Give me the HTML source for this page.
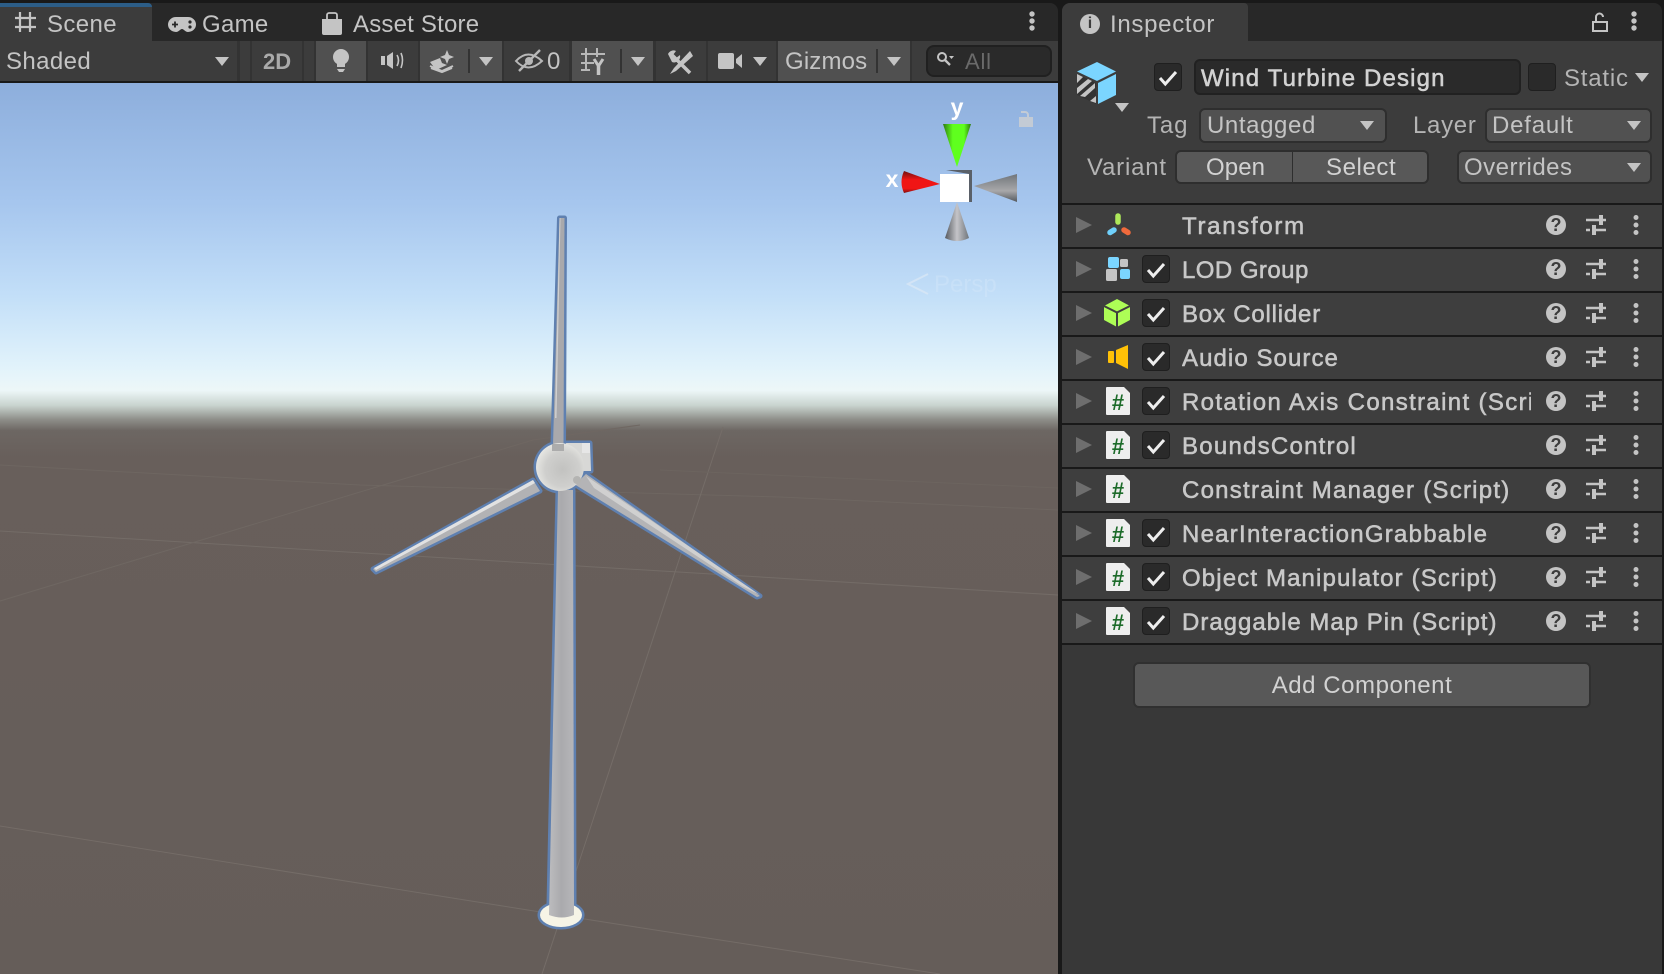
<!DOCTYPE html>
<html><head><meta charset="utf-8"><title>Unity Scene and Inspector</title>
<style>
html,body{margin:0;padding:0;width:1664px;height:974px;overflow:hidden;background:#191919}
body{position:relative;font-family:"Liberation Sans",sans-serif;color:#c4c4c4}
.a{position:absolute}
.t{position:absolute;font-size:24px;line-height:30px;white-space:nowrap;color:#c4c4c4}
.b{-webkit-text-stroke:.55px currentColor;letter-spacing:1.25px;color:#c8c8c8}
.btn{position:absolute;top:41px;height:40px;background:#3c3c3c}
.on{background:#505050}
.tri{position:absolute;width:0;height:0;border-left:7.5px solid transparent;border-right:7.5px solid transparent;border-top:9px solid #c4c4c4}
.div{position:absolute;top:49px;width:2px;height:24px;background:#333}
.field{position:absolute;background:#515151;border:2px solid #2e2e2e;border-radius:6px;box-sizing:border-box}
.row{position:absolute;left:1062px;width:600px;height:42px;background:#3e3e3e;border-bottom:2px solid #191919}
.row .rt{position:absolute;left:14px;top:12px;width:0;height:0;border-top:8.5px solid transparent;border-bottom:8.5px solid transparent;border-left:16px solid #6e6e6e}
.row .cb{position:absolute;left:80px;top:6px;width:28px;height:28px;box-sizing:border-box;background:#2a2a2a;border:1px solid #1f1f1f;border-radius:4px}
.row .tx{left:120px;top:7px;width:349px;overflow:hidden}
.row svg{position:absolute;left:0;top:0;overflow:visible}
.cbx{position:absolute;width:28px;height:28px;box-sizing:border-box;background:#2a2a2a;border:1px solid #1f1f1f;border-radius:4px}
.help{position:absolute;left:484px;top:10px;width:20px;height:20px;border-radius:50%;background:#c4c4c4;color:#3c3c3c;font-size:18px;font-weight:bold;line-height:21px;text-align:center}
</style></head><body>

<!-- left panel tab strip -->
<div class="a" style="left:0;top:3px;width:1058px;height:38px;background:#282828;border-radius:0 8px 0 0"></div>
<div class="a" style="left:0;top:3px;width:152px;height:38px;background:#3c3c3c;border-radius:0 4px 0 0"></div>
<div class="a" style="left:0;top:3px;width:152px;height:4px;background:#2c5d87;border-radius:0 4px 0 0"></div>
<svg class="a" style="left:0;top:0" width="1058" height="84" fill="none">
 <path d="M20 12v20M30 12v20M15 18h21M15 27h21" stroke="#c4c4c4" stroke-width="2.200"/>
 <path d="M176 17h12a8 7.500 0 0 1 0 15c-3 0-4-3-6-3s-3 3-6 3a8 7.500 0 0 1 0-15z" fill="#c4c4c4"/>
 <path d="M172 24.500h6M175 21.500v6" stroke="#282828" stroke-width="1.800"/>
 <circle cx="190" cy="22" r="1.600" fill="#282828"/><circle cx="190" cy="27" r="1.600" fill="#282828"/>
 <path d="M322 19h20v14a2 2 0 0 1-2 2h-16a2 2 0 0 1-2-2z" fill="#c4c4c4"/>
 <path d="M327 22v-7a2 2 0 0 1 2-2h6a2 2 0 0 1 2 2v7" stroke="#c4c4c4" stroke-width="1.800"/>
</svg>
<div class="t" style="left:47px;top:10px;letter-spacing:.4px">Scene</div>
<div class="t" style="left:202px;top:10px;letter-spacing:.3px">Game</div>
<div class="t" style="left:353px;top:10px;letter-spacing:.2px">Asset Store</div>
<svg class="a" style="left:1026px;top:10px" width="12" height="24"><circle cx="6" cy="4" r="2.700" fill="#c4c4c4"/><circle cx="6" cy="11" r="2.700" fill="#c4c4c4"/><circle cx="6" cy="18" r="2.700" fill="#c4c4c4"/></svg>

<!-- toolbar -->
<div class="a" style="left:0;top:41px;width:1058px;height:40px;background:#333"></div>
<div class="btn" style="left:0;width:237px"></div>
<div class="t" style="left:6px;top:47px;letter-spacing:.4px">Shaded</div>
<div class="tri" style="left:215px;top:57px"></div>
<div class="btn" style="left:240px;width:10px"></div>
<div class="btn" style="left:252px;width:50px"></div>
<div class="t" style="left:263px;top:47px;font-size:22px;font-weight:bold;color:#aaa">2D</div>
<div class="btn" style="left:304px;width:10px"></div>
<div class="btn on" style="left:316px;width:50px"></div>
<div class="btn" style="left:368px;width:50px"></div>
<div class="btn on" style="left:420px;width:82px"></div>
<div class="btn" style="left:504px;width:65px"></div>
<div class="btn on" style="left:572px;width:81px"></div>
<div class="btn" style="left:656px;width:50px"></div>
<div class="btn" style="left:708px;width:68px"></div>
<div class="btn on" style="left:778px;width:132px"></div>
<div class="btn" style="left:912px;width:146px"></div>
<div class="div" style="left:468px"></div><div class="tri" style="left:479px;top:57px"></div>
<div class="div" style="left:620px"></div><div class="tri" style="left:631px;top:57px"></div>
<div class="tri" style="left:753px;top:57px"></div>
<div class="div" style="left:876px"></div><div class="tri" style="left:887px;top:57px"></div>
<div class="t" style="left:547px;top:47px">0</div>
<div class="t" style="left:785px;top:47px;letter-spacing:.15px">Gizmos</div>
<div class="a" style="left:926px;top:45px;width:126px;height:32px;box-sizing:border-box;background:#2a2a2a;border:2px solid #202020;border-radius:8px"></div>
<div class="t" style="left:965px;top:47px;color:#6a6a6a;font-size:22px;letter-spacing:.8px">All</div>
<svg class="a" style="left:0;top:41px" width="1058" height="40" fill="none">
 <circle cx="341" cy="16" r="8" fill="#c4c4c4"/><path d="M337 22h8v4h-8z" fill="#c4c4c4"/><path d="M337 28h8l-2 3h-4z" fill="#c4c4c4"/>
 <path d="M381 15h4v9h-4zM387 15l6-4v17l-6-4z" fill="#c4c4c4"/><path d="M397 14q3 5 0 11M401 12q3 7 0 15" stroke="#c4c4c4" stroke-width="1.600"/>
 <path d="M447 9l2 5 5 2-5 2-2 5-2-5-5-2 5-2z" fill="#c4c4c4"/><path d="M430 21l10-4 2 5 5 2-11 5z" fill="#c4c4c4"/><path d="M430 25l12 5 11-5M431 27l11 4 10-4" stroke="#c4c4c4" stroke-width="2"/>
 <path d="M516 20q12-13 26 0q-14 13-26 0z" stroke="#b8b8b8" stroke-width="2"/><circle cx="529" cy="20" r="4" fill="#b8b8b8"/><path d="M519 30l21-21" stroke="#b8b8b8" stroke-width="2.400"/>
 <path d="M586 7v23M597 7v9M581 13h24M581 22h13M581 29h9" stroke="#b8b8b8" stroke-width="2"/><path d="M594 18l4.500 7 4.500-7" stroke="#c4c4c4" stroke-width="3"/><path d="M598.500 25v9" stroke="#c4c4c4" stroke-width="3.500"/>
 <path d="M672 14l18 18" stroke="#c4c4c4" stroke-width="3.500"/><path d="M668 13a6 6 0 0 1 8-3l-3 4 3 3 4-3a6 6 0 0 1-8 7z" fill="#c4c4c4"/><path d="M690 10l-16 17-4 6 6-3 17-15z" fill="#c4c4c4"/>
 <rect x="718" y="12" width="16" height="16" rx="2" fill="#c4c4c4"/><path d="M736 18l6-5v14l-6-5z" fill="#c4c4c4"/>
 <circle cx="942" cy="16" r="4" stroke="#c4c4c4" stroke-width="2"/><path d="M945 19l5 5" stroke="#c4c4c4" stroke-width="2.300"/><path d="M949 15h5l-2.500 3z" fill="#c4c4c4"/>
</svg>

<!-- scene view -->
<svg class="a" style="left:0;top:83px" width="1058" height="891" viewBox="0 83 1058 891">
 <defs>
  <linearGradient id="sky" x1="0" y1="83" x2="0" y2="974" gradientUnits="userSpaceOnUse">
   <stop offset="0" stop-color="#8daedc"/>
   <stop offset=".135" stop-color="#a6c6ee"/>
   <stop offset=".24" stop-color="#c3dff8"/>
   <stop offset=".32" stop-color="#e2f3fb"/>
   <stop offset=".345" stop-color="#edf7f8"/>
   <stop offset=".362" stop-color="#c8d3ce"/>
   <stop offset=".378" stop-color="#8d8d88"/>
   <stop offset=".39" stop-color="#6d6763"/>
   <stop offset=".42" stop-color="#685f5b"/>
   <stop offset="1" stop-color="#655d59"/>
  </linearGradient>
  <linearGradient id="mast" x1="0" x2="1" y1="0" y2="0"><stop offset="0" stop-color="#bcbcbe"/><stop offset=".5" stop-color="#aaaaad"/><stop offset="1" stop-color="#b6b6b9"/></linearGradient>
  <radialGradient id="hub" cx=".55" cy=".55" r=".6"><stop offset="0" stop-color="#c2c2c0"/><stop offset=".6" stop-color="#cfcfcd"/><stop offset="1" stop-color="#eaeae6"/></radialGradient>
  <linearGradient id="cg" x1="0" x2="1" y1="0" y2="0"><stop offset="0" stop-color="#2f7a10"/><stop offset=".35" stop-color="#5fff1e"/><stop offset=".75" stop-color="#5fff1e"/><stop offset="1" stop-color="#2f7a10"/></linearGradient>
  <linearGradient id="cr" x1="0" x2="0" y1="0" y2="1"><stop offset="0" stop-color="#6e1010"/><stop offset=".4" stop-color="#f01515"/><stop offset=".8" stop-color="#f01515"/><stop offset="1" stop-color="#7a1010"/></linearGradient>
  <linearGradient id="cw" x1="0" x2="0" y1="0" y2="1"><stop offset="0" stop-color="#70757a"/><stop offset=".6" stop-color="#a8a8aa"/><stop offset="1" stop-color="#55595e"/></linearGradient>
  <linearGradient id="cb" x1="0" x2="1" y1="0" y2="0"><stop offset="0" stop-color="#55595e"/><stop offset=".5" stop-color="#c4c4c8"/><stop offset="1" stop-color="#70757a"/></linearGradient>
 </defs>
 <rect x="0" y="83" width="1058" height="891" fill="url(#sky)"/>
 <g stroke="#746c67" stroke-width="1" fill="none">
  <path d="M0 531L1058 595"/>
  <path d="M0 826L490 904L610 923L940 974"/>
  <path d="M0 601L360 492L533 440L640 425" stroke="#6f6762"/>
  <path d="M0 465L360 485L780 497L1058 510" stroke="#6e6661"/>
  <path d="M542 974L723 427" stroke="#756d68"/>
  <path d="M660 470L1058 488" stroke="#6c645f"/>
 </g>
 <!-- outline layer -->
 <g fill="#5f80b0" stroke="#5f80b0" stroke-width="5" stroke-linejoin="round">
  <path d="M559.500 218h5l-1 227h-10.500z"/>
  <path d="M373 569L533 480L540 491L376 572z"/>
  <path d="M760 596L586 474Q580 480 574 484L757 597z"/>
  <path d="M558 490h15l1 415h-25z"/>
  <ellipse cx="561" cy="915" rx="21" ry="12"/>
  <circle cx="560" cy="467" r="24"/>
  <path d="M566 443h24l1 28h-19z"/>
 </g>
 <ellipse cx="561" cy="915" rx="21" ry="12" fill="#f6f4e6"/>
 <path d="M558 490h15l1 425q-12 5-25 0z" fill="url(#mast)"/>
 <path d="M373 569L533 480L540 491L376 572z" fill="#b2b2b4"/>
 <path d="M374 568L533 480L535 483L376 570z" fill="#e2e2e2"/>
 <path d="M760 596L586 474Q580 480 574 484L757 597z" fill="#b4b4b6"/>
 <path d="M586 476L760 595L742 586L594 488z" fill="#d0d0d0"/>
 <path d="M566 443h24l1 28h-19z" fill="#d8d8d6"/>
 <path d="M582 443l8 0v10h-8z" fill="#e6e6e6"/>
 <path d="M559.500 218h5l-1 227h-10.500z" fill="#a9a9ac"/>
 <path d="M559.500 218h1l-4 200h-1.500z" fill="#d0d0d0"/>
 <circle cx="560" cy="467" r="24" fill="url(#hub)"/>
 <path d="M552 444h12v7h-12z" fill="#acacac"/>
 <circle cx="577" cy="480" r="4" fill="#b4b4b2"/>

 <!-- gizmo -->
 <path d="M943 124h28l-14 43z" fill="url(#cg)"/>
 <path d="M940 184l-36-13q-5 11 0 22z" fill="url(#cr)"/>
 <path d="M974 186l43-12v28z" fill="url(#cw)"/>
 <path d="M957 202l12 36q-12 6-24 0z" fill="url(#cb)"/>
 <path d="M946 170h26v32h-3v-28z" fill="#5a6068"/>
 <rect x="940" y="174" width="29" height="28" fill="#fff"/>
 <text x="957" y="115" fill="#fff" font-family="Liberation Sans" font-weight="bold" font-size="23" text-anchor="middle">y</text>
 <text x="892" y="187" fill="#fff" font-family="Liberation Sans" font-weight="bold" font-size="23" text-anchor="middle">x</text>
 <rect x="1019" y="117" width="14" height="10" fill="#c3cbd5"/>
 <path d="M1021 112h4a3 3 0 0 1 3 3v2" fill="none" stroke="#c3cbd5" stroke-width="2"/>
 <path d="M928 274l-20 10 20 10" fill="none" stroke="#dbe8f5" stroke-opacity=".7" stroke-width="2"/>
 <text x="934" y="292" fill="#ffffff" fill-opacity=".14" font-family="Liberation Sans" font-size="24">Persp</text>
</svg>

<!-- inspector -->
<div class="a" style="left:1062px;top:3px;width:600px;height:38px;background:#282828;border-radius:8px 8px 0 0"></div>
<div class="a" style="left:1062px;top:3px;width:186px;height:38px;background:#3c3c3c;border-radius:8px 4px 0 0"></div>
<div class="a" style="left:1062px;top:41px;width:600px;height:162px;background:#3c3c3c"></div>
<div class="a" style="left:1062px;top:203px;width:600px;height:771px;background:#383838"></div>
<div class="a" style="left:1062px;top:203px;width:600px;height:2px;background:#191919"></div>
<div class="a" style="left:1080px;top:14px;width:20px;height:20px;border-radius:50%;background:#c4c4c4;color:#3c3c3c;text-align:center;font:bold 16px/20px 'Liberation Sans',sans-serif">i</div>
<div class="t" style="left:1110px;top:10px;letter-spacing:.7px">Inspector</div>
<svg class="a" style="left:0;top:0" width="1664" height="205" fill="none">
 <rect x="1593" y="22" width="14" height="9" stroke="#c4c4c4" stroke-width="2"/>
 <path d="M1596 22v-5a3.500 3.500 0 0 1 7 0" stroke="#c4c4c4" stroke-width="2"/>
 <circle cx="1634" cy="14" r="2.700" fill="#c4c4c4"/><circle cx="1634" cy="21" r="2.700" fill="#c4c4c4"/><circle cx="1634" cy="28" r="2.700" fill="#c4c4c4"/>
 <path d="M1097 62l19 9.500-19 9.500-20-9.500z" fill="#7bd5ff"/>
 <path d="M1116 74v21l-18 9v-21z" fill="#7bd5ff"/>
 <path d="M1077 74l19 9v21l-19-9z" fill="#333"/>
 <path d="M1077 74l6 3-6 6zM1077 88l11-9 4 2-15 13zM1080 96l15-13v5l-10 9zM1090 101l6-5v7z" fill="#c4c4c4"/>
 <path d="M1115 103h14l-7 9z" fill="#c4c4c4"/>
</svg>
<div class="cbx" style="left:1154px;top:63px"></div>
<svg class="a" style="left:1154px;top:63px" width="28" height="28" fill="none"><path d="M6 15l5.300 6L22 9" stroke="#eee" stroke-width="3"/></svg>
<div class="a" style="left:1194px;top:59px;width:327px;height:36px;box-sizing:border-box;background:#2a2a2a;border:2px solid #212121;border-radius:6px"></div>
<div class="t" style="left:1201px;top:64px;color:#d2d2d2;-webkit-text-stroke:.55px #d2d2d2;letter-spacing:1.15px">Wind Turbine Design</div>
<div class="cbx" style="left:1528px;top:63px"></div>
<div class="t" style="left:1564px;top:64px;letter-spacing:.8px;color:#b4b4b4">Static</div>
<div class="tri" style="left:1635px;top:73px"></div>

<div class="t" style="left:1147px;top:111px;letter-spacing:.9px;color:#b4b4b4">Tag</div>
<div class="field" style="left:1199px;top:108px;width:188px;height:35px"></div>
<div class="t" style="left:1207px;top:111px;letter-spacing:.6px">Untagged</div>
<div class="tri" style="left:1360px;top:121px"></div>
<div class="t" style="left:1413px;top:111px;letter-spacing:.7px;color:#b4b4b4">Layer</div>
<div class="field" style="left:1485px;top:108px;width:167px;height:35px"></div>
<div class="t" style="left:1492px;top:111px;letter-spacing:.8px">Default</div>
<div class="tri" style="left:1627px;top:121px"></div>

<div class="t" style="left:1087px;top:153px;letter-spacing:.8px;color:#b4b4b4">Variant</div>
<div class="field" style="left:1175px;top:150px;width:119px;height:34px;background:#585858;border-radius:6px 0 0 6px"></div>
<div class="field" style="left:1293px;top:150px;width:136px;height:34px;background:#585858;border-left:0;border-radius:0 6px 6px 0"></div>
<div class="t" style="left:1206px;top:153px;letter-spacing:.1px;color:#d2d2d2">Open</div>
<div class="t" style="left:1326px;top:153px;letter-spacing:.6px;color:#d2d2d2">Select</div>
<div class="field" style="left:1457px;top:150px;width:195px;height:34px"></div>
<div class="t" style="left:1464px;top:153px;letter-spacing:.5px">Overrides</div>
<div class="tri" style="left:1627px;top:163px"></div>

<!-- component rows -->
<div class="row" style="top:205px"><div class="rt"></div>
 <svg width="600" height="42" fill="none" stroke-width="5.500" stroke-linecap="round"><path d="M56 11v6" stroke="#aee85a"/><path d="M48 27.500l4-2.500" stroke="#6fd0fb"/><path d="M62 25l4 2.500" stroke="#f06a3c"/></svg>
 <div class="t b tx" style="letter-spacing:1.7px">Transform</div>
 <div class="help">?</div>
 <svg width="600" height="42" fill="none" stroke="#c4c4c4"><path d="M524 15h13M541 15h3M534 25h10M524 25h4" stroke-width="2.400"/><path d="M537 10h4v10h-4zM530 20h4v10h-4z" fill="#c4c4c4" stroke-width="0"/><circle cx="574" cy="12.500" r="2.500" fill="#c4c4c4" stroke="none"/><circle cx="574" cy="20" r="2.500" fill="#c4c4c4" stroke="none"/><circle cx="574" cy="27.500" r="2.500" fill="#c4c4c4" stroke="none"/></svg>
</div>

<div class="row" style="top:249px"><div class="rt"></div><div class="cb"></div>
 <svg width="600" height="42" fill="none"><rect x="46" y="8" width="11" height="11" rx="2" fill="#7bd5ff"/><rect x="58" y="10" width="8" height="8" rx="1.500" fill="#c4c4c4"/><rect x="44" y="20" width="11" height="12" rx="1.500" fill="#c4c4c4"/><rect x="58" y="20" width="10" height="10" rx="2" fill="#7bd5ff"/><path d="M86 21l5.300 6L102 15" stroke="#eee" stroke-width="3"/></svg>
 <div class="t b tx" style="letter-spacing:.45px">LOD Group</div>
 <div class="help">?</div>
 <svg width="600" height="42" fill="none" stroke="#c4c4c4"><path d="M524 15h13M541 15h3M534 25h10M524 25h4" stroke-width="2.400"/><path d="M537 10h4v10h-4zM530 20h4v10h-4z" fill="#c4c4c4" stroke-width="0"/><circle cx="574" cy="12.500" r="2.500" fill="#c4c4c4" stroke="none"/><circle cx="574" cy="20" r="2.500" fill="#c4c4c4" stroke="none"/><circle cx="574" cy="27.500" r="2.500" fill="#c4c4c4" stroke="none"/></svg>
</div>

<div class="row" style="top:293px"><div class="rt"></div><div class="cb"></div>
 <svg width="600" height="42" fill="none"><path d="M55 6l13 7v14l-13 7-13-7V13z" fill="#adfd56"/><path d="M42 13l13 6.500L68 13M55 19.500V34" stroke="#3e3e3e" stroke-width="2"/><path d="M86 21l5.300 6L102 15" stroke="#eee" stroke-width="3"/></svg>
 <div class="t b tx" style="letter-spacing:.8px">Box Collider</div>
 <div class="help">?</div>
 <svg width="600" height="42" fill="none" stroke="#c4c4c4"><path d="M524 15h13M541 15h3M534 25h10M524 25h4" stroke-width="2.400"/><path d="M537 10h4v10h-4zM530 20h4v10h-4z" fill="#c4c4c4" stroke-width="0"/><circle cx="574" cy="12.500" r="2.500" fill="#c4c4c4" stroke="none"/><circle cx="574" cy="20" r="2.500" fill="#c4c4c4" stroke="none"/><circle cx="574" cy="27.500" r="2.500" fill="#c4c4c4" stroke="none"/></svg>
</div>

<div class="row" style="top:337px"><div class="rt"></div><div class="cb"></div>
 <svg width="600" height="42" fill="none"><rect x="46" y="14" width="6" height="12" rx="1" fill="#ffc107"/><path d="M54 13l12-5v24l-12-6z" fill="#ffc107"/><path d="M86 21l5.300 6L102 15" stroke="#eee" stroke-width="3"/></svg>
 <div class="t b tx" style="letter-spacing:1.07px">Audio Source</div>
 <div class="help">?</div>
 <svg width="600" height="42" fill="none" stroke="#c4c4c4"><path d="M524 15h13M541 15h3M534 25h10M524 25h4" stroke-width="2.400"/><path d="M537 10h4v10h-4zM530 20h4v10h-4z" fill="#c4c4c4" stroke-width="0"/><circle cx="574" cy="12.500" r="2.500" fill="#c4c4c4" stroke="none"/><circle cx="574" cy="20" r="2.500" fill="#c4c4c4" stroke="none"/><circle cx="574" cy="27.500" r="2.500" fill="#c4c4c4" stroke="none"/></svg>
</div>

<div class="row" style="top:381px"><div class="rt"></div><div class="cb"></div>
 <svg width="600" height="42" fill="none"><path d="M44 7a1 1 0 0 1 1-1h17l6 6v21a1 1 0 0 1-1 1H45a1 1 0 0 1-1-1z" fill="#eee"/><text x="56" y="29" font-family="Liberation Sans" font-weight="bold" font-size="22" fill="#1d6b2a" text-anchor="middle">#</text><path d="M86 21l5.300 6L102 15" stroke="#eee" stroke-width="3"/></svg>
 <div class="t b tx" style="letter-spacing:1.35px">Rotation Axis Constraint (Script)</div>
 <div class="help">?</div>
 <svg width="600" height="42" fill="none" stroke="#c4c4c4"><path d="M524 15h13M541 15h3M534 25h10M524 25h4" stroke-width="2.400"/><path d="M537 10h4v10h-4zM530 20h4v10h-4z" fill="#c4c4c4" stroke-width="0"/><circle cx="574" cy="12.500" r="2.500" fill="#c4c4c4" stroke="none"/><circle cx="574" cy="20" r="2.500" fill="#c4c4c4" stroke="none"/><circle cx="574" cy="27.500" r="2.500" fill="#c4c4c4" stroke="none"/></svg>
</div>

<div class="row" style="top:425px"><div class="rt"></div><div class="cb"></div>
 <svg width="600" height="42" fill="none"><path d="M44 7a1 1 0 0 1 1-1h17l6 6v21a1 1 0 0 1-1 1H45a1 1 0 0 1-1-1z" fill="#eee"/><text x="56" y="29" font-family="Liberation Sans" font-weight="bold" font-size="22" fill="#1d6b2a" text-anchor="middle">#</text><path d="M86 21l5.300 6L102 15" stroke="#eee" stroke-width="3"/></svg>
 <div class="t b tx">BoundsControl</div>
 <div class="help">?</div>
 <svg width="600" height="42" fill="none" stroke="#c4c4c4"><path d="M524 15h13M541 15h3M534 25h10M524 25h4" stroke-width="2.400"/><path d="M537 10h4v10h-4zM530 20h4v10h-4z" fill="#c4c4c4" stroke-width="0"/><circle cx="574" cy="12.500" r="2.500" fill="#c4c4c4" stroke="none"/><circle cx="574" cy="20" r="2.500" fill="#c4c4c4" stroke="none"/><circle cx="574" cy="27.500" r="2.500" fill="#c4c4c4" stroke="none"/></svg>
</div>

<div class="row" style="top:469px"><div class="rt"></div>
 <svg width="600" height="42" fill="none"><path d="M44 7a1 1 0 0 1 1-1h17l6 6v21a1 1 0 0 1-1 1H45a1 1 0 0 1-1-1z" fill="#eee"/><text x="56" y="29" font-family="Liberation Sans" font-weight="bold" font-size="22" fill="#1d6b2a" text-anchor="middle">#</text></svg>
 <div class="t b tx">Constraint Manager (Script)</div>
 <div class="help">?</div>
 <svg width="600" height="42" fill="none" stroke="#c4c4c4"><path d="M524 15h13M541 15h3M534 25h10M524 25h4" stroke-width="2.400"/><path d="M537 10h4v10h-4zM530 20h4v10h-4z" fill="#c4c4c4" stroke-width="0"/><circle cx="574" cy="12.500" r="2.500" fill="#c4c4c4" stroke="none"/><circle cx="574" cy="20" r="2.500" fill="#c4c4c4" stroke="none"/><circle cx="574" cy="27.500" r="2.500" fill="#c4c4c4" stroke="none"/></svg>
</div>

<div class="row" style="top:513px"><div class="rt"></div><div class="cb"></div>
 <svg width="600" height="42" fill="none"><path d="M44 7a1 1 0 0 1 1-1h17l6 6v21a1 1 0 0 1-1 1H45a1 1 0 0 1-1-1z" fill="#eee"/><text x="56" y="29" font-family="Liberation Sans" font-weight="bold" font-size="22" fill="#1d6b2a" text-anchor="middle">#</text><path d="M86 21l5.300 6L102 15" stroke="#eee" stroke-width="3"/></svg>
 <div class="t b tx">NearInteractionGrabbable</div>
 <div class="help">?</div>
 <svg width="600" height="42" fill="none" stroke="#c4c4c4"><path d="M524 15h13M541 15h3M534 25h10M524 25h4" stroke-width="2.400"/><path d="M537 10h4v10h-4zM530 20h4v10h-4z" fill="#c4c4c4" stroke-width="0"/><circle cx="574" cy="12.500" r="2.500" fill="#c4c4c4" stroke="none"/><circle cx="574" cy="20" r="2.500" fill="#c4c4c4" stroke="none"/><circle cx="574" cy="27.500" r="2.500" fill="#c4c4c4" stroke="none"/></svg>
</div>

<div class="row" style="top:557px"><div class="rt"></div><div class="cb"></div>
 <svg width="600" height="42" fill="none"><path d="M44 7a1 1 0 0 1 1-1h17l6 6v21a1 1 0 0 1-1 1H45a1 1 0 0 1-1-1z" fill="#eee"/><text x="56" y="29" font-family="Liberation Sans" font-weight="bold" font-size="22" fill="#1d6b2a" text-anchor="middle">#</text><path d="M86 21l5.300 6L102 15" stroke="#eee" stroke-width="3"/></svg>
 <div class="t b tx" style="letter-spacing:1.13px">Object Manipulator (Script)</div>
 <div class="help">?</div>
 <svg width="600" height="42" fill="none" stroke="#c4c4c4"><path d="M524 15h13M541 15h3M534 25h10M524 25h4" stroke-width="2.400"/><path d="M537 10h4v10h-4zM530 20h4v10h-4z" fill="#c4c4c4" stroke-width="0"/><circle cx="574" cy="12.500" r="2.500" fill="#c4c4c4" stroke="none"/><circle cx="574" cy="20" r="2.500" fill="#c4c4c4" stroke="none"/><circle cx="574" cy="27.500" r="2.500" fill="#c4c4c4" stroke="none"/></svg>
</div>

<div class="row" style="top:601px"><div class="rt"></div><div class="cb"></div>
 <svg width="600" height="42" fill="none"><path d="M44 7a1 1 0 0 1 1-1h17l6 6v21a1 1 0 0 1-1 1H45a1 1 0 0 1-1-1z" fill="#eee"/><text x="56" y="29" font-family="Liberation Sans" font-weight="bold" font-size="22" fill="#1d6b2a" text-anchor="middle">#</text><path d="M86 21l5.300 6L102 15" stroke="#eee" stroke-width="3"/></svg>
 <div class="t b tx" style="letter-spacing:1px">Draggable Map Pin (Script)</div>
 <div class="help">?</div>
 <svg width="600" height="42" fill="none" stroke="#c4c4c4"><path d="M524 15h13M541 15h3M534 25h10M524 25h4" stroke-width="2.400"/><path d="M537 10h4v10h-4zM530 20h4v10h-4z" fill="#c4c4c4" stroke-width="0"/><circle cx="574" cy="12.500" r="2.500" fill="#c4c4c4" stroke="none"/><circle cx="574" cy="20" r="2.500" fill="#c4c4c4" stroke="none"/><circle cx="574" cy="27.500" r="2.500" fill="#c4c4c4" stroke="none"/></svg>
</div>

<div class="field" style="left:1133px;top:662px;width:458px;height:46px;background:#585858;border:2px solid #303030"></div>
<div class="t" style="left:1133px;top:671px;width:458px;text-align:center;color:#d2d2d2;letter-spacing:.55px">Add Component</div>
</body></html>
